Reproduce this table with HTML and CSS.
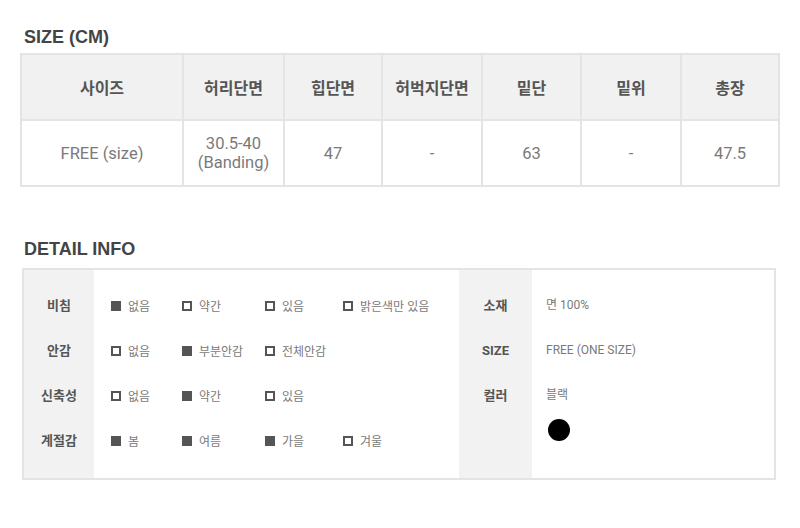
FILE: index.html
```html
<!DOCTYPE html>
<html lang="ko">
<head>
<meta charset="utf-8">
<link rel="stylesheet" href="styles.css">
</head>
<body>
<div class="page">
  <h2 class="title">SIZE (CM)</h2>
  <table class="size-table">
    <colgroup>
      <col class="w1"><col class="w2"><col class="w3"><col class="w4"><col class="w5"><col class="w6"><col class="w7">
    </colgroup>
    <thead>
      <tr>
        <th>사이즈</th>
        <th>허리단면</th>
        <th>힙단면</th>
        <th>허벅지단면</th>
        <th>밑단</th>
        <th>밑위</th>
        <th>총장</th>
      </tr>
    </thead>
    <tbody>
      <tr>
        <td>FREE (size)</td>
        <td class="two">30.5-40<br>(Banding)</td>
        <td>47</td>
        <td>-</td>
        <td>63</td>
        <td>-</td>
        <td>47.5</td>
      </tr>
    </tbody>
  </table>

  <h2 class="title title2">DETAIL INFO</h2>
  <div class="detail">
    <div class="left">
      <div class="lab">비침</div>
      <div class="opts">
        <span class="opt"><i class="box on"></i>없음</span>
        <span class="opt"><i class="box"></i>약간</span>
        <span class="opt"><i class="box"></i>있음</span>
        <span class="opt"><i class="box"></i>밝은색만 있음</span>
      </div>
      <div class="lab">안감</div>
      <div class="opts">
        <span class="opt"><i class="box"></i>없음</span>
        <span class="opt"><i class="box on"></i>부분안감</span>
        <span class="opt"><i class="box"></i>전체안감</span>
      </div>
      <div class="lab">신축성</div>
      <div class="opts">
        <span class="opt"><i class="box"></i>없음</span>
        <span class="opt"><i class="box on"></i>약간</span>
        <span class="opt"><i class="box"></i>있음</span>
      </div>
      <div class="lab">계절감</div>
      <div class="opts">
        <span class="opt"><i class="box on"></i>봄</span>
        <span class="opt"><i class="box on"></i>여름</span>
        <span class="opt"><i class="box on"></i>가을</span>
        <span class="opt"><i class="box"></i>겨울</span>
      </div>
    </div>
    <div class="right">
      <div class="lab">소재</div>
      <div class="val">면 100%</div>
      <div class="lab lat">SIZE</div>
      <div class="val">FREE (ONE SIZE)</div>
      <div class="lab">컬러</div>
      <div class="val">
        <div>블랙</div>
        <div class="dot"></div>
      </div>
    </div>
  </div>
</div>
</body>
</html>
```

FILE: styles.css
```css
html, body {
  margin: 0;
  padding: 0;
  background: #fff;
}
body {
  font-family: Roboto, "Noto Sans CJK KR", sans-serif;
  color: #555;
}
.page {
  padding: 27px 0 0 20px;
  width: 760px;
}
.title {
  margin: 0 0 6px 4px;
  font-family: "Liberation Sans", "Noto Sans CJK KR", sans-serif;
  font-size: 18px;
  font-weight: bold;
  color: #444;
  line-height: 20px;
}
.title2 {
  margin-top: 52px;
  margin-bottom: 9px;
}
.size-table {
  border-collapse: collapse;
  width: 758px;
  table-layout: fixed;
}
.w1 { width: 162px; }
.w2 { width: 101px; }
.w3 { width: 98px; }
.w4 { width: 100px; }
.w5 { width: 99px; }
.w6 { width: 100px; }
.w7 { width: 98px; }
.size-table th,
.size-table td {
  border: 2px solid #e4e4e4;
  text-align: center;
  padding: 0;
}
.size-table th {
  background: #f1f1f1;
  height: 64px;
  font-size: 16px;
  font-weight: bold;
  color: #555;
}
.size-table td {
  height: 64px;
  font-size: 16.5px;
  color: #7a7a7a;
  line-height: 19px;
}
.detail {
  margin-left: 2px;
  width: 750px;
  border: 2px solid #e4e4e4;
  display: grid;
  grid-template-columns: 435px 1fr;
}
.left {
  display: grid;
  grid-template-columns: 70px 1fr;
  grid-auto-rows: 45px;
  padding-bottom: 15px;
  background: linear-gradient(to right, #f2f2f2 70px, #fff 70px);
  padding-top: 13px;
}
.lab {
  font-size: 13px;
  font-weight: bold;
  color: #555;
  text-align: center;
  line-height: 45px;
}
.opts {
  display: grid;
  grid-template-columns: 71px 83px 78px auto;
  padding-left: 17px;
  align-items: center;
}
.opt {
  display: flex;
  align-items: center;
  font-size: 12px;
  color: #7a7a7a;
}
.box {
  display: inline-block;
  width: 6px;
  height: 6px;
  border: 2px solid #555;
  margin-right: 7px;
}
.box.on {
  background: #555;
}
.right {
  display: grid;
  grid-template-columns: 73px 1fr;
  grid-template-rows: 45px 45px auto;
  padding-top: 13px;
  background: linear-gradient(to right, #f2f2f2 73px, #fff 73px);
}
.right .val {
  font-size: 12px;
  color: #7a7a7a;
  line-height: 45px;
  padding-left: 14px;
}
.dot {
  width: 22px;
  height: 22px;
  border-radius: 50%;
  background: #000;
  margin-top: 1px;
  margin-left: 2px;
}
```
